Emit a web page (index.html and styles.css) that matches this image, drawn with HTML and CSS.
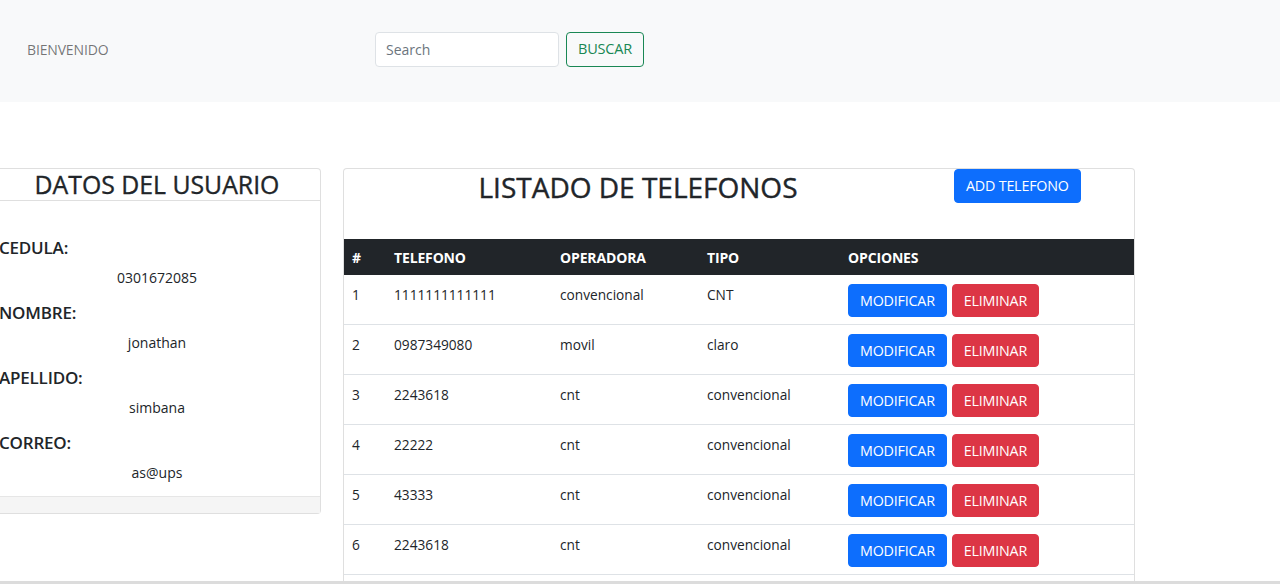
FILE: index.html
```html
<!DOCTYPE html>
<html lang="es">
<head>
<meta charset="utf-8">
<title>Telefonos</title>
<link rel="stylesheet" href="styles.css">
</head>
<body>
<nav class="navbar">
  <span class="brand">BIENVENIDO</span>
  <form class="search">
    <input class="search-input" type="text" placeholder="Search">
    <button class="btn btn-outline-success" type="button">BUSCAR</button>
  </form>
</nav>
<main class="main">
  <section class="card user-card">
    <div class="card-header"><h2 class="user-title">DATOS DEL USUARIO</h2></div>
    <div class="card-body user-body">
      <div class="field"><div class="field-label">CEDULA:</div><div class="field-value">0301672085</div></div>
      <div class="field"><div class="field-label">NOMBRE:</div><div class="field-value">jonathan</div></div>
      <div class="field"><div class="field-label">APELLIDO:</div><div class="field-value">simbana</div></div>
      <div class="field"><div class="field-label">CORREO:</div><div class="field-value">as@ups</div></div>
    </div>
    <div class="card-footer"></div>
  </section>
  <section class="card list-card">
    <div class="list-head">
      <h1 class="list-title">LISTADO DE TELEFONOS</h1>
      <button class="btn btn-primary add-btn" type="button">ADD TELEFONO</button>
    </div>
    <table class="table">
      <thead>
        <tr><th class="c-num">#</th><th class="c-tel">TELEFONO</th><th class="c-op">OPERADORA</th><th class="c-tipo">TIPO</th><th>OPCIONES</th></tr>
      </thead>
      <tbody>
        <tr><td>1</td><td>1111111111111</td><td>convencional</td><td>CNT</td><td><div class="options"><button class="btn btn-primary">MODIFICAR</button><button class="btn btn-danger">ELIMINAR</button></div></td></tr>
        <tr><td>2</td><td>0987349080</td><td>movil</td><td>claro</td><td><div class="options"><button class="btn btn-primary">MODIFICAR</button><button class="btn btn-danger">ELIMINAR</button></div></td></tr>
        <tr><td>3</td><td>2243618</td><td>cnt</td><td>convencional</td><td><div class="options"><button class="btn btn-primary">MODIFICAR</button><button class="btn btn-danger">ELIMINAR</button></div></td></tr>
        <tr><td>4</td><td>22222</td><td>cnt</td><td>convencional</td><td><div class="options"><button class="btn btn-primary">MODIFICAR</button><button class="btn btn-danger">ELIMINAR</button></div></td></tr>
        <tr><td>5</td><td>43333</td><td>cnt</td><td>convencional</td><td><div class="options"><button class="btn btn-primary">MODIFICAR</button><button class="btn btn-danger">ELIMINAR</button></div></td></tr>
        <tr><td>6</td><td>2243618</td><td>cnt</td><td>convencional</td><td><div class="options"><button class="btn btn-primary">MODIFICAR</button><button class="btn btn-danger">ELIMINAR</button></div></td></tr>
      </tbody>
    </table>
    <div class="list-foot"></div>
  </section>
</main>
<div class="window-edge"></div>
</body>
</html>
```
FILE: styles.css
```css
* { box-sizing: border-box; }
html, body { margin: 0; padding: 0; }
body {
  font-family: "Open Sans", "Noto Sans", "Liberation Sans", sans-serif;
  font-size: 14px;
  line-height: 1.5;
  color: #212529;
  background: #fff;
  overflow: hidden;
  height: 584px;
}
.navbar {
  height: 102px;
  background: #f8f9fa;
  display: flex;
  align-items: center;
  padding: 0 0 4px 27px;
}
.brand {
  color: rgba(0,0,0,.55);
  font-size: 14px;
  width: 348px;
  letter-spacing: -0.15px;
}
.search { display: flex; gap: 7px; margin: 0; }
.search-input {
  width: 184px;
  height: 35px;
  border: 1px solid #dee2e6;
  border-radius: 4px;
  padding: 0 10px;
  font: inherit;
  font-size: 14px;
  background: #fff;
  color: #212529;
}
.search-input::placeholder { color: #6c757d; }
.btn {
  font-family: inherit;
  font-size: 14.3px;
  line-height: 1.5;
  border-radius: 4px;
  border: 1px solid transparent;
  padding: 0 11px;
  height: 33px;
  cursor: pointer;
  letter-spacing: -0.2px;
}
.btn-outline-success {
  height: 35px;
  color: #198754;
  border-color: #198754;
  background: transparent;
  font-size: 14.5px;
}
.btn-primary { background: #0d6efd; border-color: #0d6efd; color: #fff; }
.btn-danger { background: #dc3545; border-color: #dc3545; color: #fff; }

.main {
  display: flex;
  align-items: flex-start;
  gap: 22px;
  margin-top: 66px;
  margin-left: -7px;
}
.card {
  border: 1px solid rgba(0,0,0,.125);
  border-radius: 4px;
  background: #fff;
}
.user-card { width: 328px; flex: none; }
.card-header {
  border-bottom: 1px solid rgba(0,0,0,.125);
  height: 32px;
  display: flex;
  align-items: center;
  justify-content: center;
}
.user-title {
  margin: 0;
  font-size: 24.8px;
  font-weight: 500;
  line-height: 1;
  -webkit-text-stroke: 0.35px #212529;
}
.user-body {
  padding: 36px 0 13px 5px;
  display: flex;
  flex-direction: column;
  gap: 14px;
}
.field-label {
  font-size: 17px;
  font-weight: 600;
  line-height: 22px;
  letter-spacing: -0.2px;
}
.field-value {
  text-align: center;
  margin-top: 8px;
  line-height: 21px;
  padding-right: 5px;
}
.card-footer {
  height: 17px;
  background: #f5f5f5;
  border-top: 1px solid rgba(0,0,0,.06);
}
.list-card { width: 792px; flex: none; }
.list-head {
  display: flex;
  align-items: flex-start;
  height: 70px;
}
.list-title {
  margin: 0;
  width: 588px;
  text-align: center;
  font-size: 28px;
  font-weight: 500;
  line-height: 36px;
  color: #212529;
  -webkit-text-stroke: 0.4px #212529;
}
.add-btn { margin-left: 22px; height: 34px; padding: 0 11px; }
.table {
  width: 100%;
  border-collapse: collapse;
}
.table th {
  background: #212529;
  color: #fff;
  text-align: left;
  font-weight: 700;
  height: 36px;
  padding: 0 8px;
  font-size: 14px;
  letter-spacing: -0.15px;
}
.c-num { width: 42px; }
.c-tel { width: 166px; }
.c-op { width: 147px; }
.c-tipo { width: 141px; }
.table td {
  vertical-align: top;
  padding: 9px 8px 7px;
  border-bottom: 1px solid #dee2e6;
  line-height: 22px;
  font-size: 13.7px;
}
.options { display: flex; gap: 5px; }
.list-foot { height: 20px; }
.window-edge {
  position: fixed;
  left: 0;
  right: 0;
  bottom: 0;
  height: 3px;
  background: #dcdcdc;
}
```
